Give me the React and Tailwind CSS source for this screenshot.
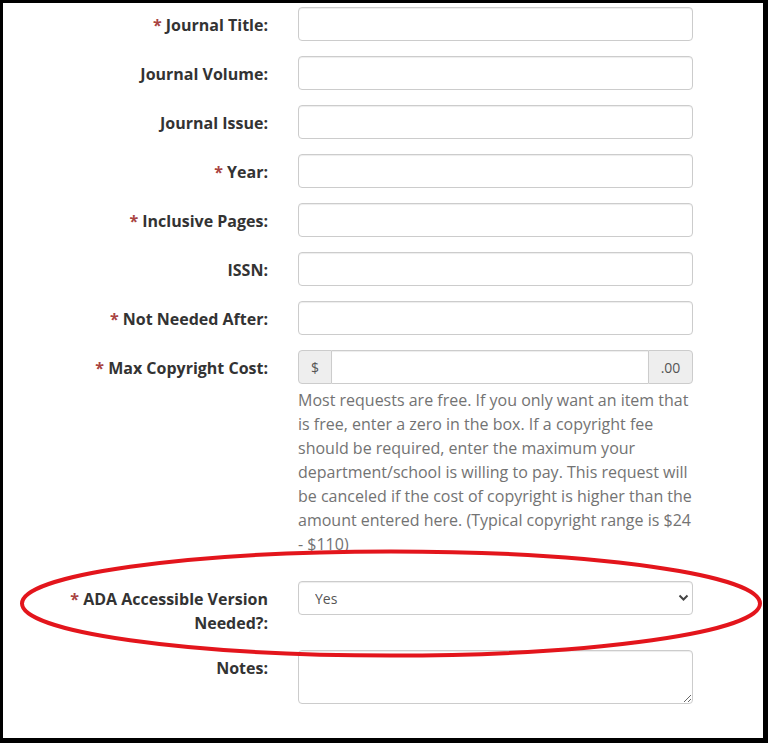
import React from 'react';

const fields = [
  { label: 'Journal Title:', req: true },
  { label: 'Journal Volume:' },
  { label: 'Journal Issue:' },
  { label: 'Year:', req: true },
  { label: 'Inclusive Pages:', req: true },
  { label: 'ISSN:' },
  { label: 'Not Needed After:', req: true },
];

const Label = ({ children, req }) => (
  <label className="w-[265px] shrink-0 pt-[6px] text-right text-[16px] font-bold leading-6 text-[#333]">
    {req && <span className="text-[#a94442]">* </span>}
    {children}
  </label>
);

const inputCls =
  'h-[34px] w-full rounded-[4px] border border-[#ccc] bg-white px-3 text-[14px] text-[#555] shadow-[inset_0_1px_1px_rgba(0,0,0,0.075)] outline-none';

const App = () => {
  return (
    <div
      className="relative h-[743px] w-[768px] overflow-hidden border-t-[3px] border-r-[5px] border-b-[5px] border-l-[3px] border-black bg-white"
      style={{ fontFamily: '"Open Sans", "Liberation Sans", sans-serif' }}
    >
      <form className="flex flex-col gap-[15px] pt-[4px]">
        {fields.map((f) => (
          <div key={f.label} className="flex gap-[30px]">
            <Label req={f.req}>{f.label}</Label>
            <div className="w-[395px]">
              <input type="text" className={inputCls} />
            </div>
          </div>
        ))}

        {/* Max copyright cost */}
        <div className="flex gap-[30px]">
          <Label req>Max Copyright Cost:</Label>
          <div className="w-[395px]">
            <div className="flex h-[34px] w-full">
              <span className="flex w-[34px] shrink-0 items-center justify-center rounded-l-[4px] border border-[#ccc] bg-[#eee] text-[14px] text-[#555]">
                $
              </span>
              <input
                type="text"
                className="h-[34px] min-w-0 flex-1 border-y border-[#ccc] bg-white px-3 text-[14px] text-[#555] shadow-[inset_0_1px_1px_rgba(0,0,0,0.075)] outline-none"
              />
              <span className="flex w-[45px] shrink-0 items-center justify-center rounded-r-[4px] border border-[#ccc] bg-[#eee] text-[14px] text-[#555]">
                .00
              </span>
            </div>
            <p className="mt-[4px] mb-[10px] text-[16px] leading-6 text-[#737373]">
              Most requests are free. If you only want an item that is free, enter a zero in the box. If a copyright fee should be required, enter the maximum your department/school is willing to pay. This request will be canceled if the cost of copyright is higher than the amount entered here. (Typical copyright range is $24 - $110)
            </p>
          </div>
        </div>

        {/* ADA */}
        <div className="flex gap-[30px]">
          <Label req>ADA Accessible Version Needed?:</Label>
          <div className="relative w-[395px]">
            <select className={inputCls + ' appearance-none pl-[16px]'} defaultValue="Yes">
              <option>Yes</option>
              <option>No</option>
            </select>
            <svg
              className="pointer-events-none absolute top-[12px] right-[4px]"
              width="11"
              height="9"
              viewBox="0 0 11 9"
            >
              <path d="M1.5 2.5 L5.5 6.5 L9.5 2.5" fill="none" stroke="#444" strokeWidth="2" />
            </svg>
          </div>
        </div>

        {/* Notes */}
        <div className="flex gap-[30px]">
          <Label>Notes:</Label>
          <div className="w-[395px]">
            <textarea
              rows={2}
              className="block h-[54px] w-full rounded-[4px] border border-[#ccc] bg-white px-3 py-[6px] text-[14px] text-[#555] shadow-[inset_0_1px_1px_rgba(0,0,0,0.075)] outline-none"
            />
          </div>
        </div>
      </form>

      {/* red annotation ellipse */}
      <svg
        className="pointer-events-none absolute top-[-3px] left-[-3px]"
        width="768"
        height="743"
        viewBox="0 0 768 743"
      >
        <ellipse cx="391" cy="603.5" rx="369" ry="52" fill="none" stroke="#e3151c" strokeWidth="4" />
      </svg>
    </div>
  );
};

export default App;
